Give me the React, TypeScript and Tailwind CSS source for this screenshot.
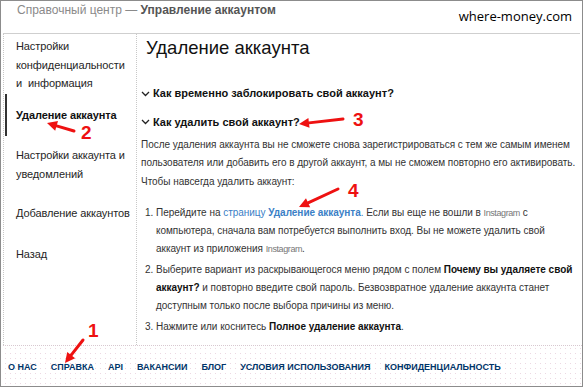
import React from "react";

const F = { fontFamily: '"Liberation Sans", Arial, sans-serif' };

function Chevron() {
  return (
    <svg width="9" height="6" viewBox="0 0 9 6" className="mr-[3px] mt-[1px]">
      <path d="M1 1 L4.5 4.5 L8 1" fill="none" stroke="#222" strokeWidth="1.3" />
    </svg>
  );
}

function Arrow({ x1, y1, x2, y2 }: { x1: number; y1: number; x2: number; y2: number }) {
  const ang = Math.atan2(y2 - y1, x2 - x1);
  const L = 10;
  const W = 5;
  const bx = x2 - L * Math.cos(ang);
  const by = y2 - L * Math.sin(ang);
  const px = -Math.sin(ang) * W;
  const py = Math.cos(ang) * W;
  return (
    <g>
      <line x1={x1} y1={y1} x2={bx} y2={by} stroke="#ee1111" strokeWidth="3" strokeLinecap="round" />
      <polygon points={`${x2},${y2} ${bx + px},${by + py} ${bx - px},${by - py}`} fill="#ee1111" />
    </g>
  );
}

function Insta() {
  return <span className="text-[#777] text-[9px] tracking-[-0.4px]">Instagram</span>;
}

export default function App() {
  return (
    <div className="relative w-[583px] h-[387px] overflow-hidden bg-white border border-[#8c8c8c] text-[#262626]" style={F}>
      {/* header */}
      <div className="ml-[2px] mr-[2px] h-[33px] flex items-start justify-between border-b border-[#cfcfcf]">
        <div className="pl-[14px] pt-[0px] text-[12px] text-[#8a8a8a]">
          Справочный центр — <span className="font-bold text-[#555]">Управление аккаунтом</span>
        </div>
        <div className="pr-[8px] pt-[6px] text-[13px] text-black" style={{ fontFamily: '"Open Sans", "Liberation Sans", sans-serif' }}>
          where-money.com
        </div>
      </div>
      {/* body */}
      <div className="ml-[2px] flex h-[311px] border-l border-dotted border-[#c8c8c8]">
        <div className="w-[133px] shrink-0 border-r border-dotted border-[#c8c8c8] pt-[3px] text-[11px] leading-[18.5px] tracking-[-0.1px]">
          <div className="pl-[12px] pr-[2px]">Настройки конфиденциальности и&nbsp;&nbsp;информация</div>
          <div className="relative mt-[1px] pl-[12px] py-[12px] font-bold text-[#111]">
            <div className="absolute left-[1px] top-0 bottom-0 w-[2px] bg-[#333]" />
            Удаление аккаунта
          </div>
          <div className="mt-[10px] pl-[12px] pr-[4px]">Настройки аккаунта и уведомлений</div>
          <div className="mt-[21px] pl-[12px]">Добавление аккаунтов</div>
          <div className="mt-[22px] pl-[12px]">Назад</div>
        </div>
        <div className="flex-1 pl-[8px] pr-[1px] pt-[2px]">
          <h1 className="text-[18.5px] leading-[24px] text-[#111] ml-[1px]">Удаление аккаунта</h1>
          <div className="mt-[25px] flex items-center text-[11px] font-bold text-[#111] -ml-[4px]">
            <Chevron />Как временно заблокировать свой аккаунт?
          </div>
          <div className="mt-[12px] flex items-center text-[11px] font-bold text-[#111] -ml-[4px]">
            <Chevron />Как удалить свой аккаунт?
          </div>
          <div className="mt-[6px] text-[10px] leading-[18px] text-[#333] -ml-[4px] tracking-[-0.03px]">
            <p>После удаления аккаунта вы не сможете снова зарегистрироваться с тем же самым именем пользователя или добавить его в другой аккаунт, а мы не сможем повторно его активировать.</p>
            <p className="mt-[1px]">Чтобы навсегда удалить аккаунт:</p>
            <ol className="mt-[13px] pl-[4px]">
              <li className="flex">
                <span className="w-[11px] shrink-0">1.</span>
                <span>Перейдите на <span className="text-[#3b80c6]">страницу <b>Удаление аккаунта</b>.</span> Если вы еще не вошли в <Insta /> с компьютера, сначала вам потребуется выполнить вход. Вы не можете удалить свой аккаунт из приложения <Insta />.</span>
              </li>
              <li className="flex mt-[3px]">
                <span className="w-[11px] shrink-0">2.</span>
                <span>Выберите вариант из раскрывающегося меню рядом с полем <b className="text-[#111]">Почему вы удаляете свой аккаунт?</b> и повторно введите свой пароль. Безвозвратное удаление аккаунта станет доступным только после выбора причины из меню.</span>
              </li>
              <li className="flex mt-[3px]">
                <span className="w-[11px] shrink-0">3.</span>
                <span>Нажмите или коснитесь <b className="text-[#111]">Полное удаление аккаунта</b>.</span>
              </li>
            </ol>
          </div>
        </div>
      </div>
      {/* footer */}
      <div className="ml-[2px] h-[41px] border-t border-dotted border-[#d8c8d0] bg-[radial-gradient(#ecd8e2_0.6px,transparent_0.8px)] bg-[length:5px_5px] flex items-center pt-[4px] pl-[5px] gap-[14px] text-[9px] font-bold text-[#003569]">
        <span>О НАС</span>
        <span>СПРАВКА</span>
        <span>API</span>
        <span>ВАКАНСИИ</span>
        <span>БЛОГ</span>
        <span>УСЛОВИЯ ИСПОЛЬЗОВАНИЯ</span>
        <span>КОНФИДЕНЦИАЛЬНОСТЬ</span>
      </div>
      {/* annotations */}
      <svg className="absolute left-0 top-0 pointer-events-none" width="583" height="387">
        <Arrow x1={82} y1={339} x2={64} y2={362} />
        <Arrow x1={73} y1={130} x2={46} y2={122} />
        <Arrow x1={342} y1={118} x2={298} y2={123} />
        <Arrow x1={337} y1={188} x2={298} y2={206} />
      </svg>
      <div className="absolute left-[87px] top-[320px] text-[19px] font-bold text-[#ee1111] leading-none">1</div>
      <div className="absolute left-[80px] top-[122px] text-[19px] font-bold text-[#ee1111] leading-none">2</div>
      <div className="absolute left-[352px] top-[109px] text-[19px] font-bold text-[#ee1111] leading-none">3</div>
      <div className="absolute left-[347px] top-[180px] text-[19px] font-bold text-[#ee1111] leading-none">4</div>
    </div>
  );
}
